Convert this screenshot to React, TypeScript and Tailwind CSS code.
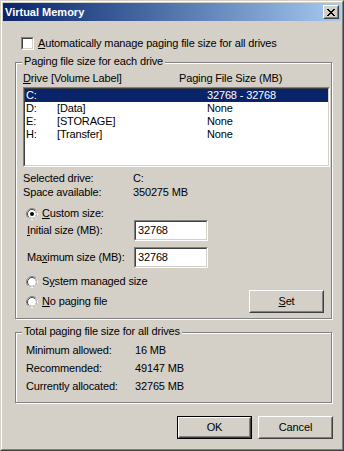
import React from 'react';

const face = 'bg-[#d4d0c8]';

function Sunken({ className = '', children }: { className?: string; children?: React.ReactNode }) {
  return (
    <div className={`border border-t-[#808080] border-l-[#808080] border-r-white border-b-white ${className}`}>
      <div className="h-full w-full border border-t-[#404040] border-l-[#404040] border-r-[#d4d0c8] border-b-[#d4d0c8] bg-white">
        {children}
      </div>
    </div>
  );
}

function Button({ label, def = false }: { label: React.ReactNode; def?: boolean }) {
  return (
    <div className={`h-[23px] w-[75px] ${def ? 'border border-black' : ''}`}>
      <div className="h-full w-full border border-t-white border-l-white border-r-[#404040] border-b-[#404040]">
        <div className="flex h-full w-full items-center justify-center border border-t-[#d4d0c8] border-l-[#d4d0c8] border-r-[#808080] border-b-[#808080]">
          {label}
        </div>
      </div>
    </div>
  );
}

function Radio({ checked = false }: { checked?: boolean }) {
  return (
    <svg width="12" height="12" viewBox="0 0 12 12" className="shrink-0">
      <circle cx="6" cy="6" r="5.5" fill="#fff" stroke="#808080" />
      <path d="M9.89 2.11 A5.5 5.5 0 0 1 2.11 9.89" fill="none" stroke="#fff" />
      <circle cx="6" cy="6" r="4.5" fill="#fff" stroke="#404040" />
      <path d="M9.18 2.82 A4.5 4.5 0 0 1 2.82 9.18" fill="none" stroke="#d4d0c8" />
      {checked && <circle cx="6" cy="6" r="2" fill="#000" />}
    </svg>
  );
}

function CloseGlyph() {
  const rows = ['11000011', '01100110', '00111100', '00011000', '00111100', '01100110', '11000011'];
  return (
    <svg width="8" height="7" viewBox="0 0 8 7" shapeRendering="crispEdges">
      {rows.flatMap((r, y) =>
        r.split('').map((c, x) => (c === '1' ? <rect key={`${x}-${y}`} x={x} y={y} width="1" height="1" fill="#000" /> : null))
      )}
    </svg>
  );
}

function GroupBox({ title, className = '', children }: { title: string; className?: string; children?: React.ReactNode }) {
  return (
    <div className={`relative border border-[#808080] shadow-[inset_1px_1px_0_#fff,1px_1px_0_#fff] ${className}`}>
      <span className={`absolute left-[6px] top-[-8px] px-[2px] leading-[13px] ${face}`}>{title}</span>
      {children}
    </div>
  );
}

const drives = [
  { d: 'C:', label: '', size: '32768 - 32768' },
  { d: 'D:', label: '[Data]', size: 'None' },
  { d: 'E:', label: '[STORAGE]', size: 'None' },
  { d: 'H:', label: '[Transfer]', size: 'None' },
];

const totals = [
  ['Minimum allowed:', '16 MB'],
  ['Recommended:', '49147 MB'],
  ['Currently allocated:', '32765 MB'],
];

export default function App() {
  return (
    <div className="h-[451px] w-[344px] font-['Liberation_Sans',Arial,sans-serif] text-[11px] leading-[13px] tracking-[-0.15px] text-black">
      <div className={`h-full w-full border border-t-[#d4d0c8] border-l-[#d4d0c8] border-r-[#404040] border-b-[#404040] ${face}`}>
        <div className="flex h-full w-full flex-col border border-t-white border-l-white border-r-[#808080] border-b-[#808080] p-[1px]">
          {/* Title bar */}
          <div className="flex h-[18px] items-center bg-gradient-to-r from-[#0a246a] to-[#a6caf0] pl-[2px]">
            <span className="font-bold tracking-normal text-white">Virtual Memory</span>
            <div className="ml-auto mr-[2px] h-[14px] w-[16px] border border-t-white border-l-white border-r-[#404040] border-b-[#404040] bg-[#d4d0c8]">
              <div className="flex h-full w-full items-center justify-center border border-t-[#d4d0c8] border-l-[#d4d0c8] border-r-[#808080] border-b-[#808080]">
                <CloseGlyph />
              </div>
            </div>
          </div>

          <div className="flex flex-col pl-[12px]">
            {/* Auto manage checkbox */}
            <div className="ml-[6px] mt-[16px] flex h-[13px] items-center gap-[4px]">
              <Sunken className="h-[13px] w-[13px]" />
              <span>
                <u>A</u>utomatically manage paging file size for all drives
              </span>
            </div>

            {/* Per-drive group */}
            <GroupBox title="Paging file size for each drive" className="mt-[12px] h-[257px] w-[317px]">
              <div className="ml-[7px] mt-[9px] flex h-[13px]">
                <span className="w-[28px]">
                  <u>D</u>rive
                </span>
                <span className="w-[128px]">[Volume Label]</span>
                <span>Paging File Size (MB)</span>
              </div>

              <Sunken className="ml-[7px] mt-[2px] h-[80px] w-[307px]">
                {drives.map((r, i) => (
                  <div key={r.d} className={`flex h-[13px] pl-[1px] ${i === 0 ? 'bg-[#0a246a] text-white' : ''}`}>
                    <span className="w-[31px]">{r.d}</span>
                    <span className="w-[150px]">{r.label}</span>
                    <span>{r.size}</span>
                  </div>
                ))}
              </Sunken>

              <div className="ml-[7px] mt-[5px] flex h-[14px]">
                <span className="w-[110px]">Selected drive:</span>
                <span>C:</span>
              </div>
              <div className="ml-[7px] flex h-[14px]">
                <span className="w-[110px]">Space available:</span>
                <span>350275 MB</span>
              </div>

              <div className="ml-[10px] mt-[7px] flex h-[13px] items-center gap-[4px]">
                <Radio checked />
                <span>
                  <u>C</u>ustom size:
                </span>
              </div>

              <div className="ml-[11px] flex h-[21px] items-center">
                <span className="w-[107px]">
                  <u>I</u>nitial size (MB):
                </span>
                <Sunken className="h-[21px] w-[74px]">
                  <div className="pl-[2px] pt-[2px]">32768</div>
                </Sunken>
              </div>

              <div className="ml-[11px] mt-[6px] flex h-[21px] items-center">
                <span className="w-[107px]">
                  Ma<u>x</u>imum size (MB):
                </span>
                <Sunken className="h-[21px] w-[74px]">
                  <div className="pl-[2px] pt-[2px]">32768</div>
                </Sunken>
              </div>

              <div className="ml-[10px] mt-[7px] flex h-[13px] items-center gap-[4px]">
                <Radio />
                <span>
                  S<u>y</u>stem managed size
                </span>
              </div>

              <div className="mt-[2px] flex h-[23px] items-center">
                <div className="ml-[10px] flex items-center gap-[4px]">
                  <Radio />
                  <span>
                    <u>N</u>o paging file
                  </span>
                </div>
                <div className="ml-auto mr-[7px]">
                  <Button
                    label={
                      <span>
                        <u>S</u>et
                      </span>
                    }
                  />
                </div>
              </div>
            </GroupBox>

            {/* Totals group */}
            <GroupBox title="Total paging file size for all drives" className="mt-[13px] h-[71px] w-[317px]">
              <div className="ml-[10px] mt-[11px] flex flex-col gap-[5px]">
                {totals.map(([k, v]) => (
                  <div key={k} className="flex h-[13px]">
                    <span className="w-[109px]">{k}</span>
                    <span>{v}</span>
                  </div>
                ))}
              </div>
            </GroupBox>

            <div className="mt-[13px] flex justify-end gap-[6px] pr-[8px]">
              <Button label="OK" def />
              <Button label="Cancel" />
            </div>
          </div>
        </div>
      </div>
    </div>
  );
}
